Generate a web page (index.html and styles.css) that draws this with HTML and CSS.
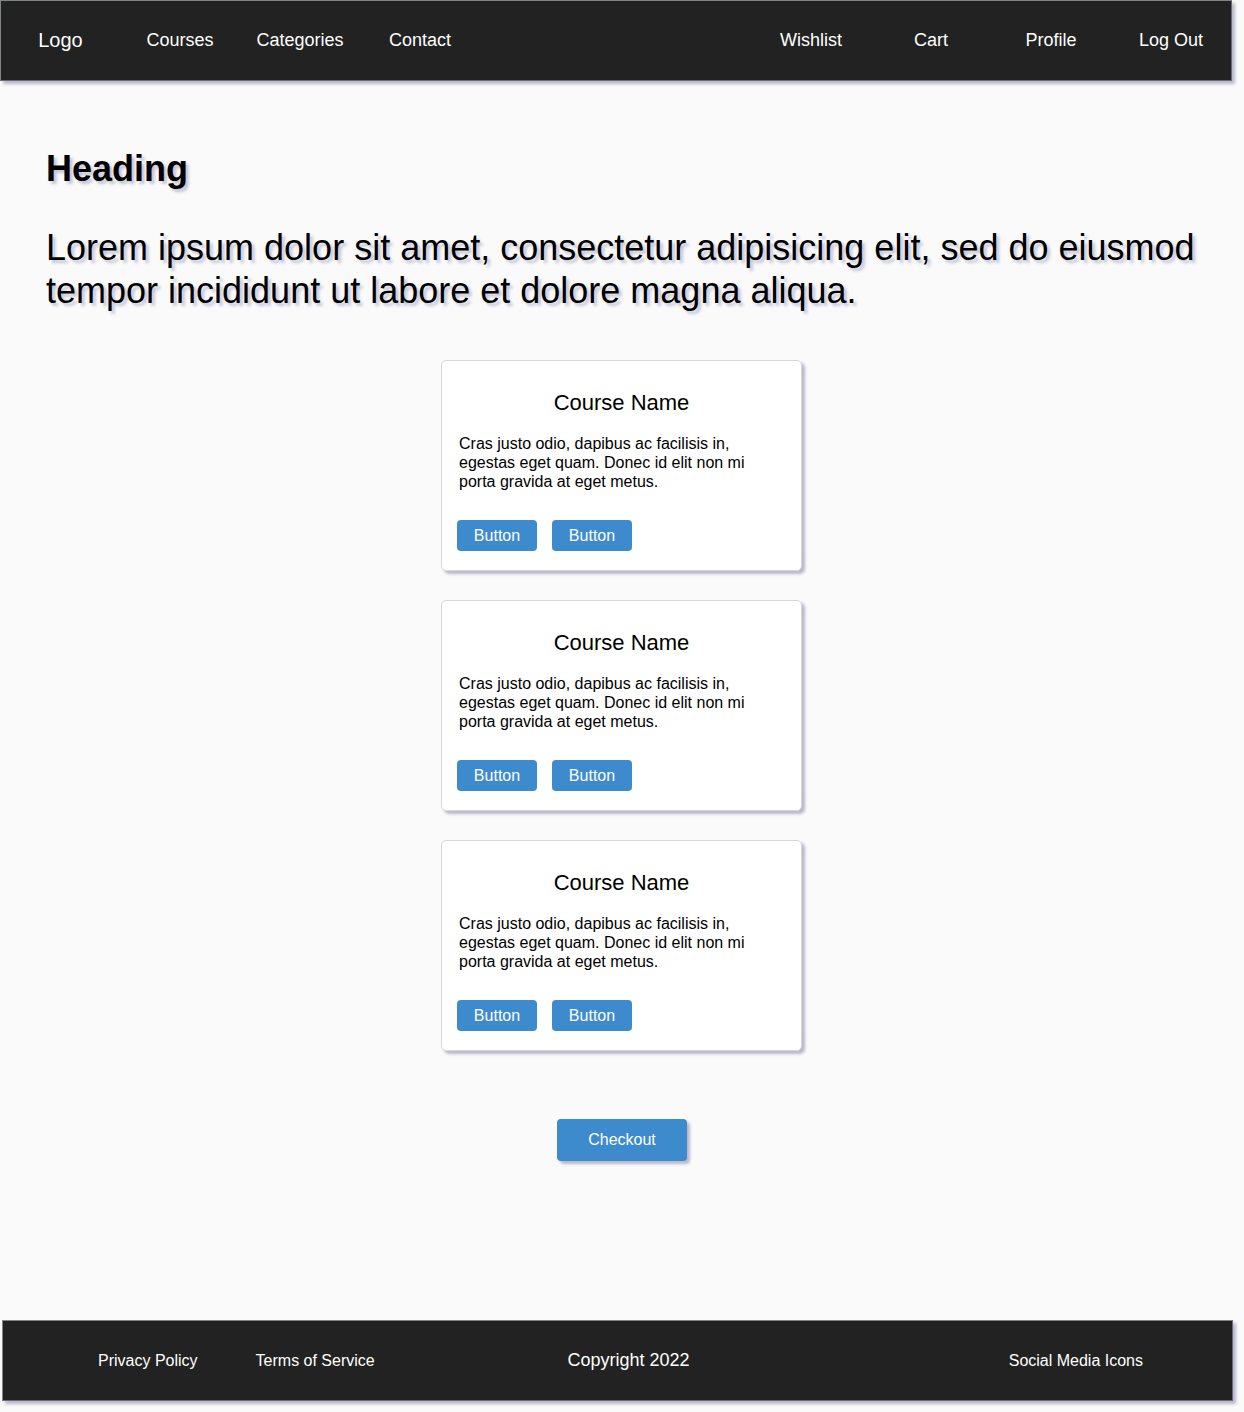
FILE: index.html
```html
<!DOCTYPE html>
<html lang="en">
<head>
<meta charset="utf-8">
<title>Courses</title>
<link rel="stylesheet" href="styles.css">
</head>
<body>
<header class="bar">
  <a class="logo" href="#">Logo</a>
  <nav class="nav nav-main">
    <a href="#">Courses</a>
    <a href="#">Categories</a>
    <a href="#">Contact</a>
  </nav>
  <nav class="nav nav-user">
    <a href="#">Wishlist</a>
    <a href="#">Cart</a>
    <a href="#">Profile</a>
    <a href="#">Log Out</a>
  </nav>
</header>
<main class="main">
  <section class="intro">
    <h1>Heading</h1>
    <p>Lorem ipsum dolor sit amet, consectetur adipisicing elit, sed do eiusmod tempor incididunt ut labore et dolore magna aliqua.</p>
  </section>
  <section class="cards">
    <article class="card">
      <h2>Course Name</h2>
      <p>Cras justo odio, dapibus ac facilisis in, egestas eget quam. Donec id elit non mi porta gravida at eget metus.</p>
      <div class="actions"><button type="button" class="btn">Button</button><button type="button" class="btn">Button</button></div>
    </article>
    <article class="card">
      <h2>Course Name</h2>
      <p>Cras justo odio, dapibus ac facilisis in, egestas eget quam. Donec id elit non mi porta gravida at eget metus.</p>
      <div class="actions"><button type="button" class="btn">Button</button><button type="button" class="btn">Button</button></div>
    </article>
    <article class="card">
      <h2>Course Name</h2>
      <p>Cras justo odio, dapibus ac facilisis in, egestas eget quam. Donec id elit non mi porta gravida at eget metus.</p>
      <div class="actions"><button type="button" class="btn">Button</button><button type="button" class="btn">Button</button></div>
    </article>
  </section>
  <button type="button" class="btn checkout">Checkout</button>
</main>
<footer class="bar footer">
  <nav class="legal">
    <a href="#">Privacy Policy</a>
    <a href="#">Terms of Service</a>
  </nav>
  <p class="copyright">Copyright 2022</p>
  <p class="social">Social Media Icons</p>
</footer>
</body>
</html>
```

FILE: styles.css
```css
* {
  box-sizing: border-box;
}

body {
  display: flex;
  flex-direction: column;
  min-height: 100vh;
  margin: 0;
  background: #fafafa;
  color: #000;
  font-family: "Liberation Sans", Arial, sans-serif;
  font-size: 16px;
}

h1,
h2,
p {
  margin: 0;
  font-weight: 400;
}

a {
  color: inherit;
  text-decoration: none;
}

.bar {
  display: flex;
  align-items: center;
  min-height: 81px;
  margin-right: 12px;
  border: 1px solid;
  border-color: #808585 #6c6a7c #6c6a7c #808585;
  background: #222;
  color: #fff;
  box-shadow: 3px 3px 3px #b8b8cc;
}

.logo {
  width: 119px;
  font-size: 20px;
  text-align: center;
}

.nav {
  display: flex;
  font-size: 18px;
}

.nav a {
  width: 120px;
  text-align: center;
}

.nav-user {
  margin-left: auto;
}

.main {
  display: flex;
  flex: 1;
  flex-direction: column;
  align-items: center;
  padding: 66px 46px;
}

.intro {
  align-self: stretch;
  font-size: 36px;
  line-height: 43px;
  text-shadow: 3px 3px 3px #c4c4d6;
}

.intro h1 {
  margin-bottom: 36px;
  font-size: 36px;
  font-weight: 700;
}

.cards {
  display: grid;
  gap: 29px;
  margin: 48px 1px 0 0;
}

.card {
  width: 361px;
  padding: 29px 15px 19px;
  border: 1px solid #d8d8d8;
  border-radius: 5px;
  background: #fff;
  box-shadow: 3px 3px 3px #b8b8cc;
}

.card h2 {
  font-size: 22px;
  line-height: 26px;
  text-align: center;
}

.card p {
  margin: 18px 30px 29px 2px;
  line-height: 19px;
}

.actions {
  display: flex;
  gap: 15px;
}

.btn {
  width: 80px;
  height: 31px;
  padding: 0;
  border: 0;
  border-radius: 4px;
  background: #3d8bcd;
  color: #fff;
  font: inherit;
}

.checkout {
  width: 130px;
  height: 42px;
  margin-top: 68px;
  box-shadow: 3px 3px 3px #b8b8cc;
}

.footer {
  display: grid;
  grid-template-columns: 1fr auto 1fr;
  margin: 0 11px 11px 2px;
}

.legal {
  display: flex;
  gap: 58px;
  padding-left: 95px;
}

.copyright {
  padding-left: 22px;
  font-size: 18px;
}

.social {
  padding-right: 89px;
  text-align: right;
}
```
